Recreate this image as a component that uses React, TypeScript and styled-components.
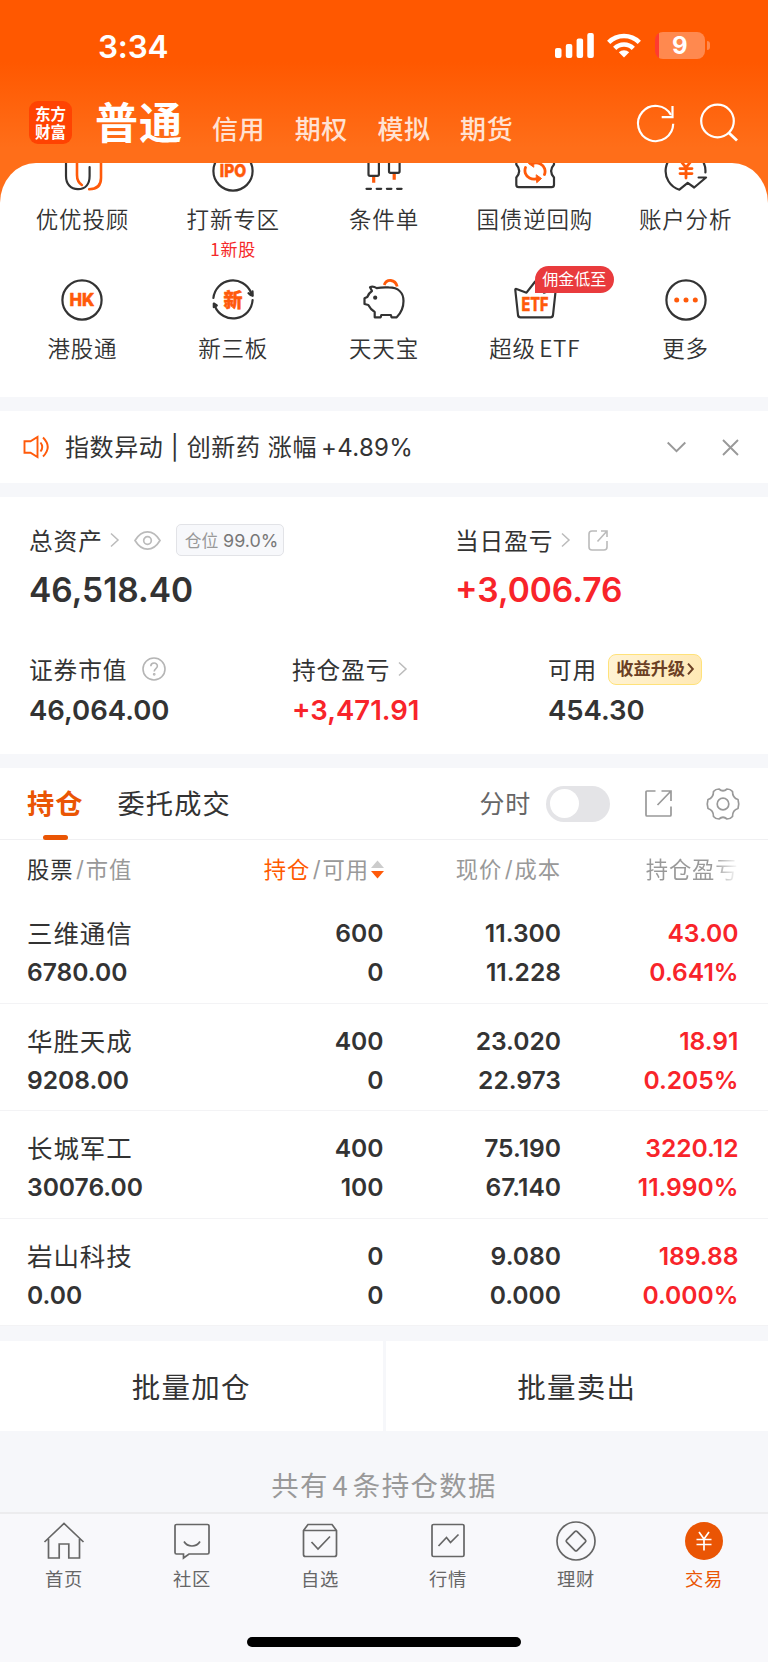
import React from 'react';
import styled, { createGlobalStyle } from 'styled-components';

const SANS = `Inter, 'Noto Sans CJK SC', sans-serif`;
const CJK = `'Noto Sans CJK SC', sans-serif`;

const GlobalStyle = createGlobalStyle`
	*, *::before, *::after {
		box-sizing: border-box;
	}
	body {
		margin: 0;
		background: #f6f7fa;
		color: #333;
		font-family: ${SANS};
	}
	svg {
		display: block;
		flex: none;
		overflow: visible;
	}
`;

const Page = styled.div`
	display: flex;
	flex-direction: column;
	width: 768px;
	height: 1662px;
	overflow: hidden;
	white-space: nowrap;
`;

/* Header */

const Top = styled.header`
	height: 163px;
	background: linear-gradient(#ff5800 0, #ff5800 62px, #ff6e19 148px);
	color: #fff;
`;
const StatusBar = styled.div`
	display: flex;
	align-items: center;
	height: 91px;
	padding: 0 58px 0 98px;
`;
const Clock = styled.div`
	flex: 1;
	font-size: 31.5px;
	font-weight: 600;
	line-height: 40px;
	padding-top: 2px;
	letter-spacing: -0.2px;
`;
const StatusIcons = styled.div`
	display: flex;
	align-items: center;
	gap: 13.5px;
`;
const Battery = styled.div`
	display: flex;
	align-items: center;
	gap: 2px;
`;
const BatteryBody = styled.div`
	width: 50.5px;
	height: 27px;
	border-radius: 8px;
	background: linear-gradient(90deg, #ff3b30 4.5px, #ff894f 4.5px);
	font-size: 24px;
	font-weight: 700;
	line-height: 27px;
	text-align: center;
`;
const BatteryTip = styled.div`
	width: 3px;
	height: 9px;
	border-radius: 0 4px 4px 0;
	background: #ff894f;
`;
const NavBar = styled.div`
	display: flex;
	height: 62px;
	padding: 10px 29px 0 29px;
`;
const Logo = styled.div`
	display: flex;
	flex-direction: column;
	align-items: center;
	width: 43px;
	height: 43px;
	padding-top: 4px;
	border-radius: 9px;
	background: #ff4302;
	font-family: ${CJK};
	font-size: 15.5px;
	font-weight: 700;
	line-height: 17.5px;
`;
const ActiveAccount = styled.div`
	margin-left: 23px;
	width: 117px;
	padding-top: 1px;
	font-size: 43px;
	font-weight: 700;
	line-height: 43px;
	letter-spacing: 1px;
`;
const Account = styled.div`
	width: 82.7px;
	padding-top: 10px;
	font-size: 26px;
	font-weight: 500;
	line-height: 38px;
	letter-spacing: 0.6px;
	color: #ffe2d3;
`;
const NavActions = styled.div`
	display: flex;
	gap: 23px;
	margin-left: auto;
	padding-top: 0.5px;
`;

/* Shortcuts */

const ShortcutBackdrop = styled.section`
	height: 234px;
	background: linear-gradient(#ff6e19 50%, #fff 50%);
`;
const ShortcutPanel = styled.div`
	height: 234px;
	border-radius: 36px 36px 0 0 / 40px 40px 0 0;
	background: #fff;
	overflow: hidden;
`;
const ShortcutGrid = styled.div`
	display: grid;
	grid-template-columns: repeat(5, 1fr);
	grid-auto-rows: 129.5px;
	margin-top: -14.5px;
	padding: 0 7px;
`;
const ShortcutItem = styled.div`
	display: flex;
	flex-direction: column;
	align-items: center;
`;
const ShortcutIcon = styled.div`
	position: relative;
`;
const ShortcutLabel = styled.div`
	margin-top: 12px;
	font-family: ${CJK};
	font-size: 22.5px;
	font-weight: 350;
	line-height: 26px;
	letter-spacing: 0.8px;
	word-spacing: -2.5px;
`;
const ShortcutNote = styled.div`
	margin-top: 8px;
	font-family: ${CJK};
	font-size: 17px;
	line-height: 20px;
	letter-spacing: 0.9px;
	color: #f52929;
`;
const ShortcutBadge = styled.span`
	position: absolute;
	left: 22px;
	top: -12.5px;
	width: 79px;
	height: 27px;
	border-radius: 14px 14px 14px 0;
	background: #e93b3d;
	color: #fff;
	font-size: 16px;
	line-height: 27px;
	text-align: center;
`;

/* Notice */

const Notice = styled.section`
	display: flex;
	align-items: center;
	height: 72px;
	margin: 14px 0;
	padding: 0 29px 0 23px;
	background: #fff;
`;
const NoticeText = styled.div`
	flex: 1;
	margin-left: 15px;
	padding-top: 1px;
	font-size: 24px;
	line-height: 32px;
	letter-spacing: 0.6px;

	span {
		margin-left: 4px;
		letter-spacing: 0.3px;
	}
`;
const NoticeActions = styled.div`
	display: flex;
	align-items: center;
	gap: 36px;
`;

/* Assets */

const Assets = styled.section`
	height: 257px;
	padding: 27px 0 0 29px;
	background: #fff;
`;
const AssetRow = styled.div<{ $columns: string }>`
	display: grid;
	grid-template-columns: ${(props) => props.$columns};

	& + & {
		margin-top: 43px;
	}
`;
const AssetLabel = styled.div`
	display: flex;
	align-items: center;
	height: 32px;
	font-size: 23.7px;
	letter-spacing: 0.9px;
`;
const AssetValue = styled.div<{ $large?: boolean; $up?: boolean }>`
	margin-top: ${({ $large }) => ($large ? '14px' : '8px')};
	font-size: ${({ $large }) => ($large ? '33.5px' : '27.5px')};
	font-weight: 600;
	line-height: ${({ $large }) => ($large ? '40px' : '34px')};
	color: ${({ $up }) => ($up ? '#f8242a' : '#333')};
`;
const Gap = styled.span<{ $size: number }>`
	flex: none;
	width: ${(props) => props.$size}px;
`;
const PositionTag = styled.span`
	height: 32px;
	padding: 0 5px 0 8px;
	border: 1px solid #e2e3e7;
	border-radius: 5px;
	background: #f7f8fb;
	color: #999;
	font-size: 16.8px;
	line-height: 31px;
	letter-spacing: 0;

	b {
		font-weight: 400;
		font-size: 17.9px;
		color: #777;
	}
`;
const UpgradeTag = styled.span`
	height: 31px;
	width: 94px;
	border: 1.5px solid #ffe27a;
	border-radius: 8px;
	background: linear-gradient(100deg, #fff3d4, #ffe9b5);
	color: #6b3f24;
	font-size: 17.2px;
	font-weight: 700;
	line-height: 28px;
	letter-spacing: 0;
	display: flex;
	align-items: center;
	justify-content: center;
	gap: 2px;
`;

/* Holdings */

const Holdings = styled.section`
	margin-top: 14px;
	background: #fff;
`;
const HoldingTabs = styled.div`
	display: flex;
	align-items: center;
	height: 72px;
	padding: 0 29px 0 27px;
	border-bottom: 1px solid #f0f0f2;
`;
const HoldingTab = styled.div<{ $active?: boolean }>`
	position: relative;
	margin-right: 34px;
	padding-top: 2px;
	font-size: 27.2px;
	font-weight: ${({ $active }) => ($active ? 600 : 400)};
	line-height: 70px;
	letter-spacing: 1.1px;
	color: ${({ $active }) => ($active ? '#ea5504' : '#333')};

	&::after {
		content: '';
		display: ${({ $active }) => ($active ? 'block' : 'none')};
		position: absolute;
		left: 16px;
		bottom: 0;
		width: 25px;
		height: 5px;
		border-radius: 3px;
		background: #ea5504;
	}
`;
const SwitchLabel = styled.div`
	margin-left: auto;
	padding-top: 1px;
	font-size: 25px;
	line-height: 32px;
	letter-spacing: 0.8px;
	color: #666;
`;
const Switch = styled.div`
	width: 64px;
	height: 36px;
	margin: 0 35px 0 15px;
	padding: 3.5px;
	border-radius: 18px;
	background: #e4e4e7;

	&::before {
		content: '';
		display: block;
		width: 29px;
		height: 29px;
		border-radius: 50%;
		background: #fff;
	}
`;
const HoldingRow = styled.div`
	display: grid;
	grid-template-columns: 200px 156.5px 177.5px 177.5px;
	height: 107.6px;
	padding: 18px 0 0 27px;
	border-bottom: 1px solid #f3f3f5;
	font-size: 24.6px;
	font-weight: 600;
	line-height: 39px;
`;
const HeadRow = styled(HoldingRow)`
	height: 56px;
	padding-top: 10px;
	border: 0;
	font-size: 22.3px;
	font-weight: 400;
	letter-spacing: 0.9px;
	color: #999;
`;
const Cell = styled.div<{ $up?: boolean }>`
	text-align: right;
	color: ${({ $up }) => ($up ? '#f8242a' : 'inherit')};

	&:first-child {
		text-align: left;
	}
`;
const HeadCell = styled.div<{ $align?: 'left' | 'right' }>`
	display: flex;
	align-items: center;
	justify-content: ${({ $align }) =>
		$align === 'left' ? 'flex-start' : 'flex-end'};
	height: 39px;
`;
const HeadMain = styled.span<{ $active?: boolean }>`
	color: ${({ $active }) => ($active ? '#ff5a00' : '#333')};
`;
const Slash = styled.i`
	padding: 0 2px 0 2.5px;
	font-style: normal;
	font-size: 22px;
	letter-spacing: 0;
`;
const FadedText = styled.span`
	background: linear-gradient(90deg, #999 72%, #fff 100%);
	background-clip: text;
	color: transparent;
`;
const StockName = styled.div`
	font-size: 25.5px;
	font-weight: 400;
	letter-spacing: 0.9px;
`;

/* Footer */

const BatchActions = styled.div`
	display: grid;
	grid-template-columns: 1fr 1fr;
	gap: 3px;
	margin-top: 14.5px;
`;
const BatchButton = styled.button`
	height: 90px;
	padding: 0;
	border: 0;
	background: #fff;
	color: #333;
	font-family: ${CJK};
	font-size: 28.5px;
	line-height: 90px;
	letter-spacing: 1.2px;
`;
const Summary = styled.div`
	padding-top: 34px;
	flex: 1;
	font-family: ${CJK};
	font-size: 27.4px;
	line-height: 38px;
	letter-spacing: 1.4px;
	word-spacing: -3.8px;
	text-align: center;
	color: #999;
`;
const TabBar = styled.nav`
	display: grid;
	grid-template-columns: repeat(6, 1fr);
	height: 125px;
	padding-top: 6px;
	border-top: 2px solid #ececee;
	background: #f8f8fb;
`;
const TabItem = styled.div<{ $active?: boolean }>`
	display: flex;
	flex-direction: column;
	align-items: center;
	font-size: 18.3px;
	line-height: 24px;
	letter-spacing: 0.8px;
	color: ${({ $active }) => ($active ? '#ea5504' : '#666')};

	span {
		margin-top: 3px;
	}
`;
const HomeArea = styled.div`
	height: 25px;
	background: #f8f8fb;
`;
const HomeIndicator = styled.div`
	width: 274px;
	height: 10px;
	margin: 0 auto;
	border-radius: 5px;
	background: #000;
`;

const ORANGE = '#ff5a0a';

const Icon: React.FC<{ children: React.ReactNode }> = ({ children }) => (
	<svg
		width="44"
		height="44"
		viewBox="0 0 44 44"
		fill="none"
		stroke="#333"
		strokeWidth="2.2"
		strokeLinecap="round"
		strokeLinejoin="round"
	>
		{children}
	</svg>
);

interface IconTextProps {
	y: number;
	width: number;
	size?: number;
	children: string;
}

const IconText: React.FC<IconTextProps> = ({ y, width, size = 18, children }) => (
	<text
		x="22"
		y={y}
		textAnchor="middle"
		textLength={width}
		lengthAdjust="spacingAndGlyphs"
		fontSize={size}
		fontWeight="800"
		fill={ORANGE}
		stroke={ORANGE}
		strokeWidth="0.5"
	>
		{children}
	</text>
);

interface Shortcut {
	label: string;
	note?: string;
	badge?: string;
	icon: React.ReactNode;
}

const shortcuts: Shortcut[] = [
	{
		label: '优优投顾',
		icon: (
			<>
				<path d="M6 4v23c0 8 4.500 13.200 12 13.200S29.600 35 29.600 27v-9" />
				<path
					d="M17 4v22c0 5 1.500 7.800 4.800 10M41 4v25c0 7.500-4.500 11.200-11.800 11.200"
					stroke={ORANGE}
					strokeWidth="2.600"
				/>
			</>
		),
	},
	{
		label: '打新专区',
		note: '1新股',
		icon: (
			<>
				<circle cx="22" cy="22" r="19.600" />
				<IconText y={28.4} width={26.5}>
					IPO
				</IconText>
			</>
		),
	},
	{
		label: '条件单',
		icon: (
			<>
				<path d="M6.500 6v19.300q0 1.500 1.500 1.500h7.400q1.500 0 1.500-1.500V6M27 6v16.300q0 1.500 1.500 1.500h7.600q1.500 0 1.500-1.500V6" />
				<path
					d="M11.700 28v5.800M32.200 25v5.800"
					stroke={ORANGE}
					strokeWidth="3.2"
					strokeLinecap="butt"
				/>
				<path d="M4.500 39.800h35.500" strokeDasharray="4.500 5.700" />
			</>
		),
	},
	{
		label: '国债逆回购',
		icon: (
			<>
				<path d="M3.300 12v3.500c4 4.500 4 8.500 0 13v7.200q0 2.500 2.500 2.500h32.700q2.500 0 2.500-2.500v-7.200c-4-4.500-4-8.500 0-13V12" />
				<g stroke={ORANGE} strokeWidth="2.800">
					<path d="M12.500 18.500c-1.500 4 0 8.500 4 10.500q3 1.500 6.500.900M31.500 25.500c1.500-4 0-8.500-4-10.500q-3-1.500-6.500-.900" />
				</g>
				<path
					d="M23.500 26l5 3.500-4.500 4zM20.500 18l-5-3.500 4.500-4z"
					fill={ORANGE}
					stroke={ORANGE}
					strokeWidth="1"
				/>
			</>
		),
	},
	{
		label: '账户分析',
		icon: (
			<>
				<path d="M22 2.400A19.600 19.600 0 0 0 15.400 40.700L23.700 33.800L30.200 38.500L42 28.500H34.600M22 2.400A19.600 19.600 0 0 1 41.400 23.500" />
				<path
					d="M17.500 13l4.500 5.500 4.500-5.500M16 19.600h12M16 24.600h12M22 19v10"
					stroke={ORANGE}
					strokeWidth="2.800"
				/>
			</>
		),
	},
	{
		label: '港股通',
		icon: (
			<>
				<circle cx="22" cy="22" r="19.600" />
				<IconText y={28.4} width={25}>
					HK
				</IconText>
			</>
		),
	},
	{
		label: '新三板',
		icon: (
			<>
				<path d="M2.400 20A19.600 19.600 0 0 1 40 14.500M41.600 22A19.600 19.600 0 0 1 4 28.500" />
				<path
					d="M37.500 15.200l3.500 1.600.500-3.500.200 4.500-2.200-.800zM2.800 29v-3.500l3 2z"
					fill="#333"
				/>
				<IconText y={28.600} width={19} size={19}>
					新
				</IconText>
			</>
		),
	},
	{
		label: '天天宝',
		icon: (
			<>
				<path d="M8 9.200q3-1.400 6.700.900 5-1 12-.700C36.500 9.500 41.500 15 41.500 23c0 6.500-2.500 12-6.800 16.300h-5.200l-.600-2.300h-9.600l-.600 2.300h-6V34q-3.700-2-6.400-7L2.500 26v-5.700L5.300 19q1.500-4 4.700-6z" />
				<circle cx="13.200" cy="19.700" r="2.100" fill="#333" stroke="none" />
				<path
					d="M22.200 7c2.500-6.500 11-6 13 1.500"
					stroke={ORANGE}
					strokeWidth="2.800"
					strokeLinecap="butt"
				/>
			</>
		),
	},
	{
		label: '超级 ETF',
		badge: '佣金低至',
		icon: (
			<>
				<path d="M2.300 12q-.200-1.500 1.200-1l10 3.700L22.200 3.500l8.800 11.200L41.500 11q1.400-.500 1.200 1L40 37q-.300 2.300-2.500 2.300h-30Q5.300 39.300 5 37z" />
				<IconText y={32.6} width={27} size={18.5}>
					ETF
				</IconText>
			</>
		),
	},
	{
		label: '更多',
		icon: (
			<>
				<circle cx="22" cy="22" r="19.600" />
				<g fill={ORANGE} stroke="none">
					<circle cx="12.700" cy="22" r="2.500" />
					<circle cx="22" cy="22" r="2.500" />
					<circle cx="31.300" cy="22" r="2.500" />
				</g>
			</>
		),
	},
];

const holdings = [
	['三维通信', '6780.00', '600', '0', '11.300', '11.228', '43.00', '0.641%'],
	['华胜天成', '9208.00', '400', '0', '23.020', '22.973', '18.91', '0.205%'],
	['长城军工', '30076.00', '400', '100', '75.190', '67.140', '3220.12', '11.990%'],
	['岩山科技', '0.00', '0', '0', '9.080', '0.000', '189.88', '0.000%'],
];

const tabs = [
	{
		label: '首页',
		icon: <path d="M2.500 22L22 3.500 41.500 22M6.500 19v19h10.700V24h9.600v14h10.700V19" />,
	},
	{
		label: '社区',
		icon: (
			<>
				<path d="M6.500 4.500h31q1.500 0 1.500 1.500v26.500q0 1.500-1.500 1.500H19l-5.500 4v-4h-7Q5 34 5 32.500V6q0-1.500 1.500-1.500z" />
				<path d="M14 21.500c3.500 6 12.500 6 16 0" />
			</>
		),
	},
	{
		label: '自选',
		icon: (
			<>
				<path d="M5.500 10.500l4.500-6h24l4.500 6v24q0 2-2 2h-29q-2 0-2-2zM5.500 10.500h33" />
				<path d="M13.500 22l6.500 7 12-12.500" />
			</>
		),
	},
	{
		label: '行情',
		icon: (
			<>
				<rect x="6" y="4.500" width="32" height="32" rx="1.500" />
				<path d="M12.500 26l8-8.500 4 5 8-8" />
			</>
		),
	},
	{
		label: '理财',
		icon: (
			<>
				<circle cx="22" cy="21" r="19" />
				<path d="M20.800 11.700q1.200-1.200 2.400 0l8.100 8.100q1.200 1.200 0 2.400l-8.100 8.100q-1.200 1.200-2.400 0l-8.100-8.100q-1.200-1.200 0-2.400z" />
			</>
		),
	},
	{
		label: '交易',
		active: true,
		icon: (
			<>
				<circle cx="22" cy="21" r="19" fill="#ea5504" stroke="none" />
				<path
					d="M17 12l5 7 5-7M14.500 19.500h15M14.500 24.500h15M22 19v11.500"
					stroke="#fff"
				/>
			</>
		),
	},
];

const Chevron = () => (
	<svg width="9" height="14" viewBox="0 0 9 14" fill="none" stroke="#bbb" strokeWidth="1.500">
		<path d="M1 .500L8 7l-7 6.500" />
	</svg>
);

const App: React.FC = () => {
	return (
		<Page>
			<GlobalStyle />
			<Top>
				<StatusBar>
					<Clock>3:34</Clock>
					<StatusIcons>
						<svg width="39" height="25" viewBox="0 0 39 25" fill="#fff">
							<rect y="15" width="6.500" height="10" rx="2" />
							<rect x="10.800" y="11" width="6.500" height="14" rx="2" />
							<rect x="21.600" y="5.500" width="6.500" height="19.500" rx="2" />
							<rect x="32.300" width="6.500" height="25" rx="2" />
						</svg>
						<svg width="34" height="25" viewBox="0 0 34 25" fill="none" stroke="#fff" strokeWidth="4.600">
							<path d="M1.700 9.300a21.800 21.800 0 0 1 30.600 0" />
							<path d="M7.700 15.300a13.200 13.200 0 0 1 18.600 0" />
							<path d="M17 24.500l-5.200-5.200a7.500 7.500 0 0 1 10.400 0z" fill="#fff" stroke="none" />
						</svg>
						<Battery>
							<BatteryBody>9</BatteryBody>
							<BatteryTip />
						</Battery>
					</StatusIcons>
				</StatusBar>
				<NavBar>
					<Logo>
						<span>东方</span>
						<span>财富</span>
					</Logo>
					<ActiveAccount>普通</ActiveAccount>
					<Account>信用</Account>
					<Account>期权</Account>
					<Account>模拟</Account>
					<Account>期货</Account>
					<NavActions>
						<svg width="40" height="42" viewBox="0 0 40 42" fill="none" stroke="#fff" strokeWidth="2.200">
							<path d="M37.200 21.800A17.600 17.600 0 1 1 35 13" />
							<path d="M36.500 4v11.200H25.700" />
						</svg>
						<svg width="40" height="42" viewBox="0 0 40 42" fill="none" stroke="#fff" strokeWidth="2.200">
							<circle cx="18.500" cy="19" r="16.300" />
							<path d="M29.500 30.500l8.500 8" strokeWidth="2.800" />
						</svg>
					</NavActions>
				</NavBar>
			</Top>

			<ShortcutBackdrop>
				<ShortcutPanel>
					<ShortcutGrid>
						{shortcuts.map(({ label, note, badge, icon }) => (
							<ShortcutItem key={label}>
								<ShortcutIcon>
									<Icon>{icon}</Icon>
									{badge && <ShortcutBadge>{badge}</ShortcutBadge>}
								</ShortcutIcon>
								<ShortcutLabel>{label}</ShortcutLabel>
								{note && <ShortcutNote>{note}</ShortcutNote>}
							</ShortcutItem>
						))}
					</ShortcutGrid>
				</ShortcutPanel>
			</ShortcutBackdrop>

			<Notice>
				<svg width="27" height="24" viewBox="0 0 27 24" fill="none" stroke={ORANGE} strokeWidth="1.900">
					<path d="M1.500 6.300h6L14.500 2v20l-7-4.300h-6z" />
					<path d="M17.500 7.500q3.500 4.500 0 9M20 2.500q9.500 9.500 0 19" />
				</svg>
				<NoticeText>
					指数异动 | 创新药 涨幅<span>+4.89%</span>
				</NoticeText>
				<NoticeActions>
					<svg width="19" height="12" viewBox="0 0 19 12" fill="none" stroke="#999" strokeWidth="1.900">
						<path d="M.700 1.500l8.800 8.700 8.800-8.700" />
					</svg>
					<svg width="17" height="17" viewBox="0 0 17 17" fill="none" stroke="#999" strokeWidth="1.900">
						<path d="M1 1l15 15M16 1L1 16" />
					</svg>
				</NoticeActions>
			</Notice>

			<Assets>
				<AssetRow $columns="426px 1fr">
					<div>
						<AssetLabel>
							总资产
							<Gap $size={7} />
							<Chevron />
							<Gap $size={15} />
							<svg width="27" height="19" viewBox="0 0 27 19" fill="none" stroke="#bbb" strokeWidth="1.700">
								<path d="M1 9.500C8-2 19-2 26 9.500 19 21 8 21 1 9.500z" />
								<circle cx="13.500" cy="9.500" r="3.800" />
							</svg>
							<Gap $size={15} />
							<PositionTag>
								仓位 <b>99.0%</b>
							</PositionTag>
						</AssetLabel>
						<AssetValue $large>46,518.40</AssetValue>
					</div>
					<div>
						<AssetLabel>
							当日盈亏
							<Gap $size={8} />
							<Chevron />
							<Gap $size={18} />
							<svg width="20" height="21" viewBox="0 0 20 21" fill="none" stroke="#bbb" strokeWidth="1.600">
								<path d="M9 1H4Q1 1 1 4v13q0 3 3 3h12q3 0 3-3v-6M13 1h6v6M19 1l-9.500 10.500" />
							</svg>
						</AssetLabel>
						<AssetValue $large $up>
							+3,006.76
						</AssetValue>
					</div>
				</AssetRow>
				<AssetRow $columns="263px 256px 1fr">
					<div>
						<AssetLabel>
							证券市值
							<Gap $size={15} />
							<svg width="24" height="24" viewBox="0 0 24 24" fill="none" stroke="#b5b5b5" strokeWidth="1.600">
								<circle cx="12" cy="12" r="11" />
								<path d="M8.800 9.300c0-4.300 6.600-4.300 6.600-.200 0 2.500-3.200 2.600-3.200 5.400" />
								<circle cx="12.200" cy="17.300" r=".600" />
							</svg>
						</AssetLabel>
						<AssetValue>46,064.00</AssetValue>
					</div>
					<div>
						<AssetLabel>
							持仓盈亏
							<Gap $size={8} />
							<Chevron />
						</AssetLabel>
						<AssetValue $up>+3,471.91</AssetValue>
					</div>
					<div>
						<AssetLabel>
							可用
							<Gap $size={11} />
							<UpgradeTag>
								收益升级
								<svg width="7" height="12" viewBox="0 0 7 12" fill="none" stroke="#6b3f24" strokeWidth="2">
									<path d="M1 .700L5.800 6 1 11.300" />
								</svg>
							</UpgradeTag>
						</AssetLabel>
						<AssetValue>454.30</AssetValue>
					</div>
				</AssetRow>
			</Assets>

			<Holdings>
				<HoldingTabs>
					<HoldingTab $active>持仓</HoldingTab>
					<HoldingTab>委托成交</HoldingTab>
					<SwitchLabel>分时</SwitchLabel>
					<Switch />
					<svg width="27" height="27" viewBox="0 0 27 27" fill="none" stroke="#999" strokeWidth="1.700">
						<path d="M10.500 1H2Q1 1 1 2v23q0 1 1 1h23q1 0 1-1v-8.500M16.500 1H26v10M26 1L12.500 15" />
					</svg>
					<Gap $size={35} />
					<svg width="32" height="32" viewBox="0 0 32 32" fill="none" stroke="#999" strokeWidth="1.700" strokeLinejoin="round">
						<path d="M12 1Q16 4.500 20 1Q23.500 1 25.500 3.500Q25.500 10 31 11.500Q32.500 16 31 20.500Q25.500 22 25.500 28.500Q23.500 31 20 31Q16 27.500 12 31Q8.500 31 6.500 28.500Q6.500 22 1 20.500Q-.500 16 1 11.500Q6.500 10 6.500 3.500Q8.500 1 12 1Z" />
						<circle cx="16" cy="16" r="5.800" />
					</svg>
				</HoldingTabs>
				<HeadRow>
					<HeadCell $align="left">
						<HeadMain>股票</HeadMain>
						<Slash>/</Slash>市值
					</HeadCell>
					<HeadCell>
						<HeadMain $active>持仓</HeadMain>
						<Slash>/</Slash>可用
						<Gap $size={1.5} />
						<svg width="13" height="19" viewBox="0 0 13 19">
							<path d="M0 8l6.500-7.500L13 8z" fill="#ccc" />
							<path d="M0 11l6.500 7.500L13 11z" fill="#ff5a0a" />
						</svg>
					</HeadCell>
					<HeadCell>
						现价<Slash>/</Slash>成本
					</HeadCell>
					<HeadCell>
						<FadedText>持仓盈亏</FadedText>
					</HeadCell>
				</HeadRow>
				{holdings.map(([name, value, held, usable, price, cost, profit, rate]) => (
					<HoldingRow key={name}>
						<Cell>
							<StockName>{name}</StockName>
							{value}
						</Cell>
						<Cell>
							<div>{held}</div>
							{usable}
						</Cell>
						<Cell>
							<div>{price}</div>
							{cost}
						</Cell>
						<Cell $up>
							<div>{profit}</div>
							{rate}
						</Cell>
					</HoldingRow>
				))}
			</Holdings>

			<BatchActions>
				<BatchButton>批量加仓</BatchButton>
				<BatchButton>批量卖出</BatchButton>
			</BatchActions>
			<Summary>共有 4 条持仓数据</Summary>

			<TabBar>
				{tabs.map(({ label, active, icon }) => (
					<TabItem key={label} $active={active}>
						<svg
							width="44"
							height="44"
							viewBox="0 0 44 44"
							fill="none"
							stroke="#666"
							strokeWidth="1.700"
						>
							{icon}
						</svg>
						<span>{label}</span>
					</TabItem>
				))}
			</TabBar>
			<HomeArea>
				<HomeIndicator />
			</HomeArea>
		</Page>
	);
};

export default App;
